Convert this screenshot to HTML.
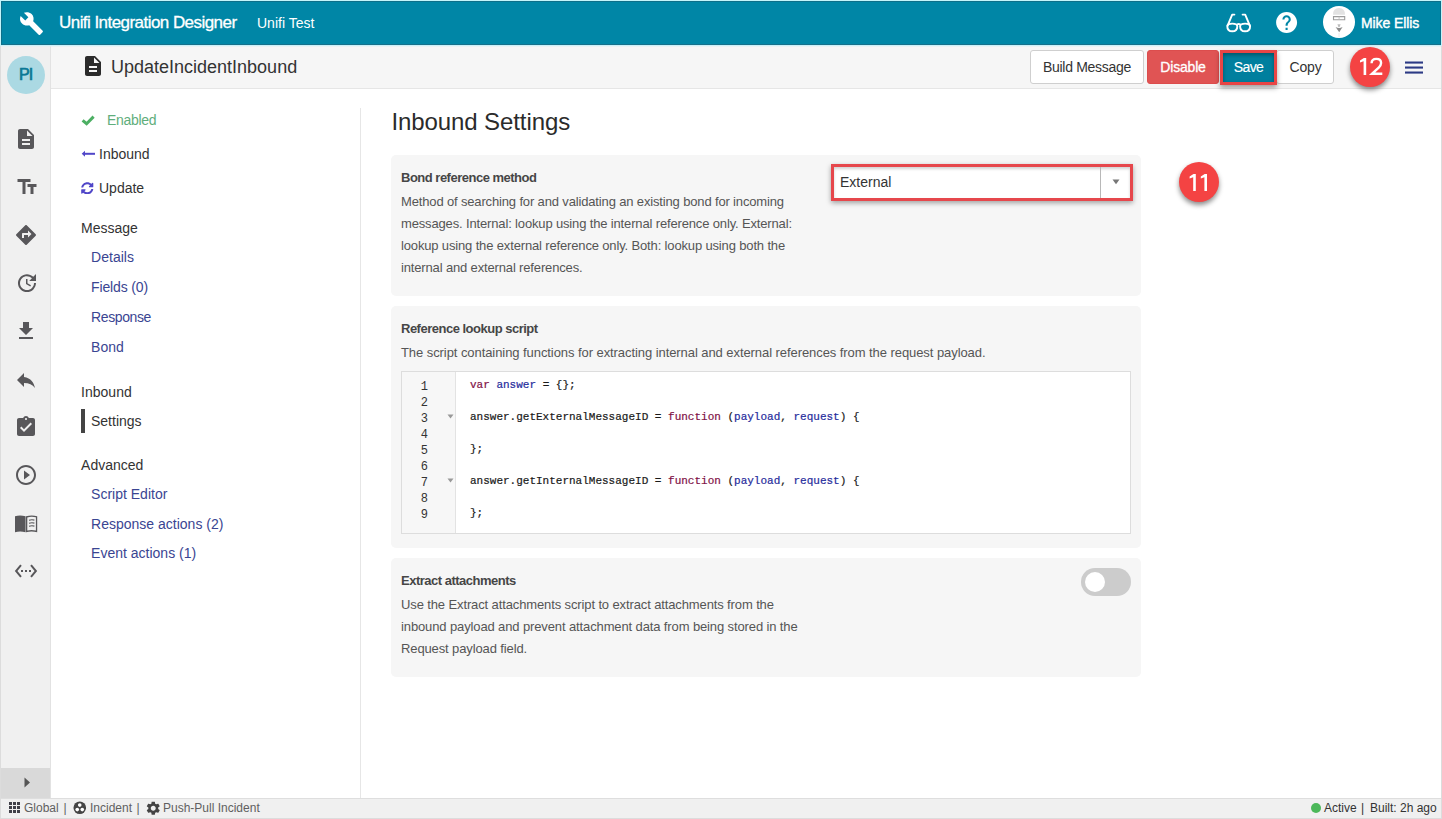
<!DOCTYPE html>
<html><head><meta charset="utf-8">
<style>
*{box-sizing:border-box;margin:0;padding:0}
html,body{width:1442px;height:819px;overflow:hidden;background:#fff;font-family:"Liberation Sans",sans-serif;color:#333}
#frame{position:absolute;left:0;top:0;width:1442px;height:819px;border:1px solid #dcdcdc;border-top-color:#c4f4fa}
#hdr{position:absolute;left:1px;top:1px;width:1440px;height:44px;background:#0086a6;box-shadow:inset 0 1px 0 #0d6f89,inset 1px 0 0 #0d6f89,inset -1px 0 0 #0d6f89,inset 0 -1px 0 #16708a}
#hdrL{position:absolute;left:0;top:0;width:1px;height:46px;background:#c4f4fa}#hdrR{position:absolute;left:1441px;top:0;width:1px;height:46px;background:#c4f4fa}
#tb{position:absolute;left:51px;top:45px;width:1390px;height:44px;background:#f6f6f6;border-bottom:1px solid #e6e6e6}
#side{position:absolute;left:1px;top:45px;width:50px;height:753px;background:#f0f0f0;border-right:1px solid #e2e2e2}
#collapse{position:absolute;left:1px;top:768px;width:49px;height:30px;background:#d9d9d9}
#status{position:absolute;left:1px;top:798px;width:1440px;height:20px;background:#f0f0f0;border-top:1px solid #dedede}
#navdiv{position:absolute;left:360px;top:108px;width:1px;height:690px;background:#e6e6e6}
.t{position:absolute;white-space:nowrap;line-height:1}
.nav{font-size:14px;color:#333}
.lnk{color:#3a4592}
.panel{position:absolute;left:391px;width:750px;background:#f6f6f6;border-radius:5px}
.lbl{position:absolute;left:401px;font-weight:bold;font-size:13px;color:#464646;white-space:nowrap;line-height:1;letter-spacing:-0.5px}
.desc{position:absolute;left:401px;font-size:13px;color:#555;line-height:22px;white-space:nowrap;letter-spacing:-0.1px}
.btn{position:absolute;top:50px;height:34px;border-radius:3px;font-size:14px;text-align:center}
.callout{position:absolute;width:40px;height:40px;border-radius:50%;background:#f44343;color:#fff;font-size:24px;text-align:center;line-height:40px;box-shadow:0 3px 5px rgba(0,0,0,.45)}
svg.ic{position:absolute;display:block}
.sic{fill:#58575a}
.code{position:absolute;font-family:"Liberation Mono",monospace;font-size:11px;line-height:16px;white-space:pre;color:#1a1a1a;-webkit-text-stroke:0.2px currentColor}
.ln{position:absolute;font-family:"Liberation Mono",monospace;font-size:12px;line-height:16px;white-space:pre;color:#333;text-align:right}
.kw{color:#7f1246}.vr{color:#262c9c}
.st{position:absolute;font-size:12px;color:#606060;white-space:nowrap;line-height:1}
</style></head><body>
<div id="frame"></div>
<div id="hdr"></div><div id="hdrL"></div><div id="hdrR"></div>
<div id="tb"></div>
<div id="side"></div>
<div id="collapse"></div>
<div id="status"></div>
<div id="navdiv"></div>
<div style="position:absolute;left:0;top:45px;width:1442px;height:1px;background:#c9f1f9"></div><div style="position:absolute;left:1px;top:46px;width:1440px;height:1px;background:#e3eef1;opacity:.6"></div>

<!-- HEADER -->
<svg class="ic" style="left:18.5px;top:10.7px" width="25" height="25" viewBox="0 0 24 24"><path fill="#fff" d="M22.7 19l-9.1-9.1c.9-2.3.4-5-1.5-6.9-2-2-5-2.4-7.4-1.3L9 6 6 9 1.6 4.7C.4 7.1.9 10.1 2.9 12.1c1.9 1.9 4.6 2.4 6.9 1.5l9.1 9.1c.4.4 1 .4 1.4 0l2.3-2.3c.5-.4.5-1.1.1-1.4z"/></svg>
<div class="t" style="left:59px;top:14px;font-size:17px;letter-spacing:-0.55px;color:#fff;-webkit-text-stroke:0.3px #fff">Unifi Integration Designer</div>
<div class="t" style="left:257px;top:16px;font-size:14px;color:#fff">Unifi Test</div>

<!-- TOOLBAR -->
<svg class="ic" style="left:81px;top:54px" width="24" height="24" viewBox="0 0 24 24"><path fill="#2b2b2b" d="M14 2H6c-1.1 0-1.99.9-1.99 2L4 20c0 1.1.89 2 1.99 2H18c1.1 0 2-.9 2-2V8l-6-6zm2 16H8v-2h8v2zm0-4H8v-2h8v2zm-3-5V3.5L18.5 9H13z"/></svg>
<div class="t" style="left:111px;top:58px;font-size:18px;color:#333">UpdateIncidentInbound</div>


<!-- HEADER RIGHT -->
<svg class="ic" style="left:1222px;top:10px" width="34" height="26" viewBox="1222 10 34 26"><g fill="none" stroke="#fff" stroke-width="1.9" stroke-linecap="round" stroke-linejoin="round"><path d="M1234.4 14.6H1232.2L1227.6 25.6"/><path d="M1242.6 14.6H1245.2L1249.8 25.6"/><path d="M1227.3 26.2C1227.3 23.9 1228.8999999999999 23.6 1232.3 23.6C1235.7 23.6 1237.3 23.9 1237.3 26.2C1237.3 29.6 1235.1 31.3 1232.3 31.3C1229.5 31.3 1227.3 29.6 1227.3 26.2Z"/><path d="M1240.1 26.2C1240.1 23.9 1241.6999999999998 23.6 1245.1 23.6C1248.5 23.6 1250.1 23.9 1250.1 26.2C1250.1 29.6 1247.8999999999999 31.3 1245.1 31.3C1242.3 31.3 1240.1 29.6 1240.1 26.2Z"/><path d="M1237.1 24.6Q1238.7 23.4 1240.3 24.6"/></g></svg>
<svg class="ic" style="left:1274px;top:10.4px" width="25.2" height="25.2" viewBox="0 0 24 24"><path fill="#fff" d="M12 2C6.48 2 2 6.48 2 12s4.48 10 10 10 10-4.48 10-10S17.52 2 12 2zm1 17h-2v-2h2v2zm2.07-7.75l-.9.92C13.45 12.9 13 13.5 13 15h-2v-.5c0-1.1.45-2.1 1.17-2.83l1.24-1.26c.37-.36.59-.86.59-1.41 0-1.1-.9-2-2-2s-2 .9-2 2H8c0-2.21 1.79-4 4-4s4 1.79 4 4c0 .88-.36 1.68-.93 2.25z"/></svg>
<svg class="ic" style="left:1323px;top:6px" width="32" height="32" viewBox="0 0 32 32"><circle cx="16" cy="16" r="16" fill="#fff"/><path d="M10 8.8Q10 2 16 2Q22 2 22 8.8Z" fill="#e2e2e2"/><path d="M10.5 10.6H21.7V13.8H10.5Z" fill="none" stroke="#9c9c9c" stroke-width="1.1"/><path d="M16.1 10.6V13.8" stroke="#bbb" stroke-width="0.8"/><path d="M14.4 18.3H17.6L16.6 21H15.4Z" fill="#bdbdbd"/><path d="M12.6 21Q16 23.2 19.6 21L16.2 26.3Z" fill="#8c8c8c"/><path d="M16 27V31" stroke="#eaeaea" stroke-width="1"/></svg>
<div class="t" style="left:1361px;top:16px;font-size:14px;letter-spacing:-0.1px;color:#fff;-webkit-text-stroke:0.4px #fff">Mike Ellis</div>

<!-- TOOLBAR BUTTONS -->
<div class="btn" style="left:1030px;width:114px;background:#fff;border:1px solid #cfcfcf;line-height:32px;color:#333;letter-spacing:-0.3px">Build Message</div>
<div class="btn" style="left:1147px;width:72px;background:#e05454;border:1px solid #dc4d4d;line-height:32px;color:#fff;letter-spacing:-0.2px;-webkit-text-stroke:0.3px #fff">Disable</div>
<div class="btn" style="left:1276px;width:58px;background:#fff;text-indent:1px;border:1px solid #cfcfcf;line-height:32px;color:#333;letter-spacing:-0.2px">Copy</div>
<div class="btn" style="left:1220px;width:57px;height:35px;border-radius:0;background:#007f9e;border:3px solid #e84545;line-height:29px;color:#fff;letter-spacing:-0.6px;-webkit-text-stroke:0.15px #fff;box-shadow:0 3px 5px rgba(0,0,0,.35), inset 0 2px 4px rgba(0,0,0,.35)">Save</div>
<div class="callout" style="left:1350px;top:47px"></div><svg class="ic" style="left:1350px;top:47px" width="40" height="40" viewBox="1350 47 40 40"><g fill="#fff"><path d="M1363.6 75V61.2L1360.0 62.6V60.4L1363.8999999999999 58H1366.1999999999998V75Z"/></g><path d="M1371.6 63.2C1371.6 60.3 1373.6 58.9 1376.4 58.9C1379.3 58.9 1381.1 60.6 1381.1 63C1381.1 64.9 1380.1 66.2 1378.7 67.7L1372 73.8H1382.3" fill="none" stroke="#fff" stroke-width="2.4"/></svg>
<svg class="ic" style="left:1405px;top:61px" width="18" height="13" viewBox="0 0 18 13"><g fill="#2c3a85"><rect x="0" y="0.5" width="18" height="2.1"/><rect x="0" y="5.5" width="18" height="2.1"/><rect x="0" y="10.5" width="18" height="2.1"/></g></svg>

<!-- SIDEBAR -->
<div style="position:absolute;left:7px;top:56px;width:38px;height:38px;border-radius:50%;background:#abd9e3"></div>
<div class="t" style="left:7px;top:67px;width:38px;text-align:center;font-size:16px;color:#0b7895;letter-spacing:-0.9px;text-indent:-0.9px;-webkit-text-stroke:0.7px #0b7895">PI</div>
<svg class="ic sic" style="left:14px;top:127px" width="24" height="24" viewBox="0 0 24 24"><path d="M14 2H6c-1.1 0-1.99.9-1.99 2L4 20c0 1.1.89 2 1.99 2H18c1.1 0 2-.9 2-2V8l-6-6zm2 16H8v-2h8v2zm0-4H8v-2h8v2zm-3-5V3.5L18.5 9H13z"/></svg>
<svg class="ic sic" style="left:14.5px;top:175px" width="24" height="24" viewBox="0 0 24 24"><path d="M2.5 4v3h5v12h3V7h5V4h-13zm19 5h-9v3h3v7h3v-7h3V9z"/></svg>
<svg class="ic sic" style="left:14px;top:223px" width="24" height="24" viewBox="0 0 24 24"><path d="M21.71 11.29l-9-9c-.39-.39-1.02-.39-1.41 0l-9 9c-.39.39-.39 1.02 0 1.41l9 9c.39.39 1.02.39 1.41 0l9-9c.39-.38.39-1.01 0-1.41zM14 14.5V12h-4v3H8v-4c0-.55.45-1 1-1h5V7.5l3.5 3.5-3.5 3.5z"/></svg>
<svg class="ic sic" style="left:14.5px;top:271px" width="24" height="24" viewBox="0 0 24 24"><path d="M21 10.12h-6.780l2.74-2.82c-2.73-2.7-7.150-2.8-9.88-.1-2.73 2.710-2.73 7.080 0 9.790s7.150 2.710 9.880 0C18.320 15.650 19 14.080 19 12.100h2c0 1.980-.88 4.550-2.64 6.290-3.510 3.480-9.210 3.480-12.720 0-3.500-3.470-3.530-9.110-.02-12.580s9.140-3.470 12.650 0L21 3v7.120zM12.500 8v4.250l3.500 2.080-.72 1.210L11 13V8h1.500z"/></svg>
<svg class="ic sic" style="left:14px;top:319px" width="24" height="24" viewBox="0 0 24 24"><path d="M19 9h-4V3H9v6H5l7 7 7-7zM5 18v2h14v-2H5z"/></svg>
<svg class="ic sic" style="left:14px;top:368px" width="24" height="24" viewBox="0 0 24 24"><path d="M10 9V5l-7 7 7 7v-4.1c5 0 8.5 1.6 11 5.1-1-5-4-10-11-11z"/></svg>
<svg class="ic sic" style="left:14px;top:415px" width="24" height="24" viewBox="0 0 24 24"><path d="M19 3h-4.18C14.4 1.84 13.3 1 12 1c-1.3 0-2.4.84-2.82 2H5c-1.1 0-2 .9-2 2v14c0 1.1.9 2 2 2h14c1.1 0 2-.9 2-2V5c0-1.1-.9-2-2-2zm-7 0c.55 0 1 .45 1 1s-.45 1-1 1-1-.45-1-1 .45-1 1-1zm-2 14l-4-4 1.41-1.41L10 14.17l6.590-6.590L18 9l-8 8z"/></svg>
<svg class="ic sic" style="left:14px;top:463px" width="24" height="24" viewBox="0 0 24 24"><path d="M10 16.5l6-4.5-6-4.5v9zM12 2C6.48 2 2 6.48 2 12s4.48 10 10 10 10-4.48 10-10S17.52 2 12 2zm0 18c-4.41 0-8-3.59-8-8s3.59-8 8-8 8 3.59 8 8-3.59 8-8 8z"/></svg>
<svg class="ic" style="left:14px;top:514px" width="24" height="20" viewBox="14 514 24 20"><path fill="#58575a" d="M15 516.2Q20 514.6 25.6 516.3V532.3Q20 530.8 15 532.3Z"/><path fill="#58575a" d="M26 516.3Q31.5 514.6 37.2 516.2V532.3Q31.5 530.8 26 532.3Z"/><path fill="#f0f0f0" d="M27.3 517.4Q31.5 516.2 35.9 517.3V530.6Q31.5 529.6 27.3 530.6Z"/><g stroke="#58575a" stroke-width="1.1" fill="none"><path d="M29 520.2Q31.8 519.4 34.4 520.1"/><path d="M29 523.2Q31.8 522.4 34.4 523.1"/><path d="M29 526.2Q31.8 525.4 34.4 526.1"/></g></svg>
<svg class="ic sic" style="left:14px;top:559px" width="24" height="24" viewBox="0 0 24 24"><path d="M7.77 6.76L6.23 5.48.82 12l5.41 6.52 1.54-1.28L3.42 12l4.35-5.24zM7 13h2v-2H7v2zm10-2h-2v2h2v-2zm-6 2h2v-2h-2v2zm6.77-7.52l-1.54 1.28L20.58 12l-4.35 5.24 1.54 1.28L23.18 12l-5.410-6.520z"/></svg>
<svg class="ic" style="left:22px;top:776px" width="10" height="13" viewBox="0 0 10 13"><path d="M2.5 1.5L8 6.5 2.5 11.5z" fill="#555"/></svg>

<!-- STATUS BAR -->
<svg class="ic" style="left:9px;top:802px" width="11" height="11" viewBox="0 0 11 11" shape-rendering="crispEdges"><g fill="#404048"><rect x="0" y="0" width="3" height="3"/><rect x="4" y="0" width="3" height="3"/><rect x="8" y="0" width="3" height="3"/><rect x="0" y="4" width="3" height="3"/><rect x="4" y="4" width="3" height="3"/><rect x="8" y="4" width="3" height="3"/><rect x="0" y="8" width="3" height="3"/><rect x="4" y="8" width="3" height="3"/><rect x="8" y="8" width="3" height="3"/></g></svg>
<div class="st" style="left:24px;top:802px">Global</div>
<div class="st" style="left:63.5px;top:802px">|</div>
<svg class="ic" style="left:72.5px;top:801px" width="13.5" height="13.5" viewBox="0 0 14 14"><circle cx="7" cy="7" r="6.5" fill="#444"/><circle cx="7" cy="4.2" r="1.9" fill="#fff"/><circle cx="4.4" cy="8.9" r="1.9" fill="#fff"/><circle cx="9.6" cy="8.9" r="1.9" fill="#fff"/></svg>
<div class="st" style="left:90px;top:802px">Incident</div>
<div class="st" style="left:136.5px;top:802px">|</div>
<svg class="ic" style="left:144.5px;top:800px" width="16.5" height="16.5" viewBox="0 0 24 24"><path fill="#444" d="M19.14 12.94c.04-.3.06-.61.06-.94 0-.32-.02-.64-.07-.94l2.03-1.58c.18-.14.23-.41.12-.61l-1.92-3.32c-.12-.22-.37-.29-.59-.22l-2.39.96c-.5-.38-1.03-.7-1.62-.94l-.36-2.54c-.04-.24-.24-.41-.48-.41h-3.84c-.24 0-.43.17-.47.41l-.36 2.54c-.59.24-1.13.57-1.62.94l-2.39-.96c-.22-.08-.47 0-.59.22L2.74 8.87c-.12.21-.08.47.12.61l2.03 1.58c-.05.3-.09.63-.09.94s.02.64.07.94l-2.03 1.58c-.18.14-.23.41-.12.61l1.92 3.32c.12.22.37.29.59.22l2.39-.96c.5.38 1.03.7 1.62.94l.36 2.54c.05.24.24.41.48.41h3.84c.24 0 .44-.17.47-.41l.36-2.54c.59-.24 1.13-.56 1.62-.94l2.39.96c.22.08.47 0 .59-.22l1.92-3.32c.12-.22.07-.47-.12-.61l-2.01-1.58zM12 15.6c-1.98 0-3.6-1.62-3.6-3.6s1.62-3.6 3.6-3.6 3.6 1.62 3.6 3.6-1.62 3.6-3.6 3.6z"/></svg>
<div class="st" style="left:163px;top:802px">Push-Pull Incident</div>
<div style="position:absolute;left:1311px;top:802.5px;width:10px;height:10px;border-radius:50%;background:#4cb85a"></div>
<div class="st" style="left:1324px;top:802px;color:#333">Active</div>
<div class="st" style="left:1361px;top:802px;color:#333">|</div>
<div class="st" style="left:1370px;top:802px;color:#333">Built: 2h ago</div>

<!-- NAV -->
<svg class="ic" style="left:80px;top:113px" width="16" height="14" viewBox="80 113 16 14"><path d="M82.6 120.3L86.6 123.7L93.6 116.6" fill="none" stroke="#4caf63" stroke-width="3"/></svg>
<div class="t nav" style="left:107px;top:112.9px;color:#5fae7c;letter-spacing:-0.3px">Enabled</div>
<svg class="ic" style="left:81px;top:149px" width="15" height="10" viewBox="81 149 15 10"><path d="M84 153.8H95" stroke="#5046c8" stroke-width="2"/><path d="M81.7 153.8L85 150.8V156.8Z" fill="#5046c8"/></svg>
<div class="t nav" style="left:99px;top:146.8px;">Inbound</div>
<svg class="ic" style="left:81px;top:181.7px" width="12.5" height="12.5" viewBox="0 0 512 512"><path fill="#5046c8" d="M370.72 133.28C339.458 104.008 298.888 87.962 255.848 88c-77.458.068-144.328 53.178-162.791 126.85-1.344 5.363-6.122 9.150-11.651 9.150H24.103c-7.498 0-13.194-6.807-11.807-14.176C33.933 94.924 134.813 8 256 8c66.448 0 126.791 26.136 171.315 68.685L463.030 40.970C478.149 25.851 504 36.559 504 57.941V192c0 13.255-10.745 24-24 24H345.941c-21.382 0-32.090-25.851-16.971-40.971l41.750-41.749zM32 296h134.059c21.382 0 32.090 25.851 16.971 40.971l-41.750 41.750c31.262 29.273 71.835 45.319 114.876 45.280 77.418-.07 144.315-53.144 162.787-126.849 1.344-5.363 6.122-9.150 11.651-9.150h57.304c7.498 0 13.194 6.807 11.807 14.176C478.067 417.076 377.187 504 256 504c-66.448 0-126.791-26.136-171.315-68.685L48.970 471.030C33.851 486.149 8 475.441 8 454.059V320c0-13.255 10.745-24 24-24z"/></svg>
<div class="t nav" style="left:99px;top:180.8px;">Update</div>
<div class="t nav" style="left:81.1px;top:221.1px;">Message</div>
<div class="t nav lnk" style="left:91.1px;top:250.1px;">Details</div>
<div class="t nav lnk" style="left:91.1px;top:280.1px;letter-spacing:-0.15px">Fields (0)</div>
<div class="t nav lnk" style="left:91.1px;top:310.1px;letter-spacing:-0.4px">Response</div>
<div class="t nav lnk" style="left:91.1px;top:340.1px;">Bond</div>
<div class="t nav" style="left:81.1px;top:384.9px;">Inbound</div>
<div style="position:absolute;left:81px;top:409px;width:4px;height:24px;background:#444"></div>
<div class="t nav" style="left:91px;top:413.9px;">Settings</div>
<div class="t nav" style="left:81.1px;top:458.0px;">Advanced</div>
<div class="t nav lnk" style="left:91.1px;top:487.1px;">Script Editor</div>
<div class="t nav lnk" style="left:91.1px;top:516.5px;">Response actions (2)</div>
<div class="t nav lnk" style="left:91.1px;top:546.1px;">Event actions (1)</div>

<!-- MAIN -->
<div class="t" style="left:391.5px;top:109.5px;font-size:24px;color:#2b2b2b;letter-spacing:-0.1px">Inbound Settings</div>
<div class="panel" style="top:155px;height:141px"></div>
<div class="lbl" style="top:171.0px">Bond reference method</div>
<div class="desc" style="top:190.6px;letter-spacing:-0.15px">Method of searching for and validating an existing bond for incoming<br>messages. Internal: lookup using the internal reference only. External:<br>lookup using the external reference only. Both: lookup using both the<br>internal and external references.</div>
<div style="position:absolute;left:831px;top:164px;width:302px;height:37px;border:3px solid #e6474c;background:#fff;box-shadow:0 2px 5px rgba(0,0,0,.35),inset 0 2px 3px rgba(0,0,0,.18)"></div>
<div style="position:absolute;left:1100px;top:167px;width:1px;height:31px;background:#b8b8b8"></div>
<div class="t" style="left:840px;top:175.4px;font-size:14px;color:#333">External</div>
<svg class="ic" style="left:1112px;top:179px" width="8" height="6" viewBox="0 0 8 6"><path d="M0.5 0.5H7.5L4 5.2Z" fill="#777"/></svg>
<div class="callout" style="left:1179px;top:162px"></div><svg class="ic" style="left:1179px;top:162px" width="40" height="40" viewBox="1179 162 40 40"><g fill="#fff"><path d="M1193.2 191V177.2L1189.6000000000001 178.6V176.4L1193.5 174H1195.8V191Z"/><path d="M1204.4 191V177.2L1200.8000000000002 178.6V176.4L1204.7 174H1207.0V191Z"/></g></svg>
<div class="panel" style="top:306px;height:242px"></div>
<div class="lbl" style="top:321.9px">Reference lookup script</div>
<div class="desc" style="top:341.5px;letter-spacing:-0.07px">The script containing functions for extracting internal and external references from the request payload.</div>
<div style="position:absolute;left:401px;top:371px;width:730px;height:163px;border:1px solid #ddd;background:#fff"></div>
<div style="position:absolute;left:402px;top:372px;width:54px;height:161px;background:#f7f7f7;border-right:1px solid #e3e3e3"></div>
<div class="ln" style="left:405px;top:378.5px;width:23px">1
2
3
4
5
6
7
8
9</div>
<svg class="ic" style="left:447px;top:414px" width="7" height="5" viewBox="0 0 7 5"><path d="M0.5 0.5H6.5L3.5 4.5Z" fill="#999"/></svg>
<svg class="ic" style="left:447px;top:478px" width="7" height="5" viewBox="0 0 7 5"><path d="M0.5 0.5H6.5L3.5 4.5Z" fill="#999"/></svg>
<div class="code" style="left:470px;top:377px"><span class="kw">var</span> <span class="vr">answer</span> = {};

answer.getExternalMessageID = <span class="kw">function</span> (<span class="vr">payload</span>, <span class="vr">request</span>) {

};

answer.getInternalMessageID = <span class="kw">function</span> (<span class="vr">payload</span>, <span class="vr">request</span>) {

};</div>
<div class="panel" style="top:558px;height:119px"></div>
<div class="lbl" style="top:574.0px">Extract attachments</div>
<div class="desc" style="top:593.5px;letter-spacing:-0.12px">Use the Extract attachments script to extract attachments from the<br>inbound payload and prevent attachment data from being stored in the<br>Request payload field.</div>
<div style="position:absolute;left:1081px;top:568px;width:50px;height:28px;border-radius:14px;background:#cccccc"></div>
<div style="position:absolute;left:1085px;top:572px;width:20px;height:20px;border-radius:50%;background:#fff"></div>
</body></html>
